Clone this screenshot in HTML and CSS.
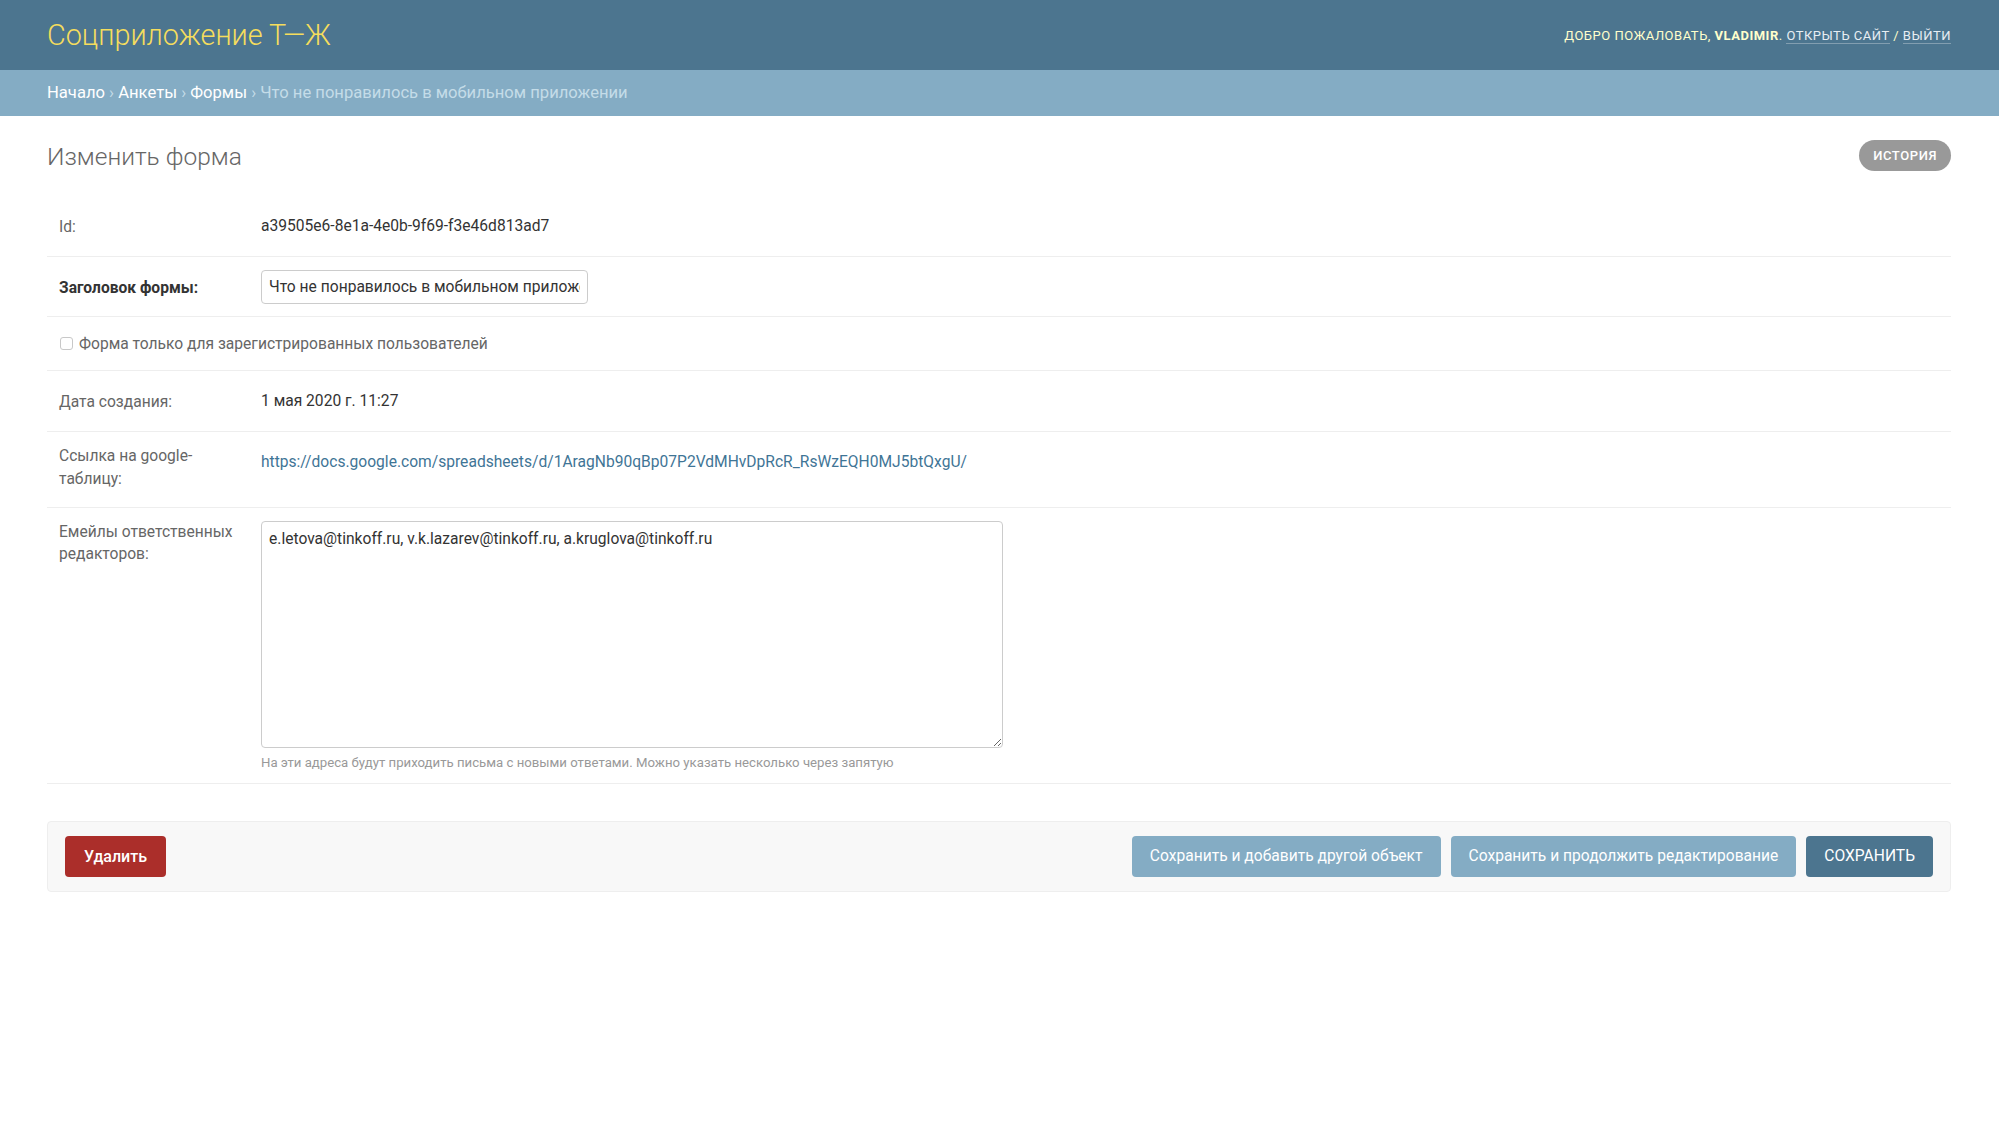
FILE: index.html
```html
<!DOCTYPE html>
<html lang="ru">
<head>
<meta charset="utf-8">
<title>Изменить форма | Соцприложение Т—Ж</title>
<link rel="stylesheet" href="styles.css">
</head>
<body>
<header class="header">
  <h1 class="branding">Соцприложение Т—Ж</h1>
  <div class="user-tools">
    Добро пожаловать, <strong>vladimir</strong>.
    <a href="#">Открыть сайт</a> /
    <a href="#">Выйти</a>
  </div>
</header>
<nav class="breadcrumbs">
  <a href="#">Начало</a> › <a href="#">Анкеты</a> › <a href="#">Формы</a> › Что не понравилось в мобильном приложении
</nav>
<main class="content">
  <div class="content-head">
    <h1 class="page-title">Изменить форма</h1>
    <a class="history" href="#">История</a>
  </div>
  <form class="form">
    <div class="row">
      <label class="label">Id:</label>
      <div class="readonly">a39505e6-8e1a-4e0b-9f69-f3e46d813ad7</div>
    </div>
    <div class="row">
      <label class="label required">Заголовок формы:</label>
      <div class="field"><input class="text-input" type="text" value="Что не понравилось в мобильном приложении"></div>
    </div>
    <div class="row checkbox-row">
      <input class="checkbox" type="checkbox" id="reg">
      <label class="checkbox-label" for="reg">Форма только для зарегистрированных пользователей</label>
    </div>
    <div class="row">
      <label class="label">Дата создания:</label>
      <div class="readonly">1 мая 2020 г. 11:27</div>
    </div>
    <div class="row">
      <label class="label">Ссылка на google-таблицу:</label>
      <div class="readonly"><a class="link" href="#">https://docs.google.com/spreadsheets/d/1AragNb90qBp07P2VdMHvDpRcR_RsWzEQH0MJ5btQxgU/</a></div>
    </div>
    <div class="row">
      <label class="label">Емейлы ответственных редакторов:</label>
      <div class="field">
        <textarea class="textarea">e.letova@tinkoff.ru, v.k.lazarev@tinkoff.ru, a.kruglova@tinkoff.ru</textarea>
        <div class="help">На эти адреса будут приходить письма с новыми ответами. Можно указать несколько через запятую</div>
      </div>
    </div>
    <div class="submit-row">
      <a class="btn delete" href="#">Удалить</a>
      <div class="actions">
        <span class="btn light">Сохранить и добавить другой объект</span>
        <span class="btn light">Сохранить и продолжить редактирование</span>
        <span class="btn default">Сохранить</span>
      </div>
    </div>
  </form>
</main>
</body>
</html>
```

FILE: styles.css
```css
* { box-sizing: border-box; }

body {
  margin: 0;
  background: #fff;
  color: #333;
  font-family: Roboto, "Liberation Sans", Arial, sans-serif;
  font-size: 15.6px;
}

a { text-decoration: none; }

.header {
  height: 70px;
  padding: 0 48px 0 47px;
  display: flex;
  justify-content: space-between;
  align-items: center;
  background: #4c758f;
  color: #ffc;
}

.branding {
  margin: 0;
  font-size: 28.8px;
  font-weight: 300;
  color: #f5dd5d;
  line-height: 1.2;
}

.user-tools {
  font-size: 13px;
  letter-spacing: 0.5px;
  text-transform: uppercase;
  color: #ffc;
}

.user-tools strong { font-weight: 700; }

.user-tools a {
  color: #e8eef3;
  border-bottom: 1px solid rgba(255, 255, 255, 0.3);
}

.breadcrumbs {
  height: 46px;
  padding: 12px 47px;
  background: #84acc4;
  color: #c4dce8;
  font-size: 16.6px;
  line-height: 22px;
}

.breadcrumbs a { color: #fff; }

.content {
  padding: 24px 48px 0 47px;
}

.content-head {
  display: flex;
  justify-content: space-between;
  align-items: flex-start;
}

.page-title {
  margin: 0;
  font-size: 24.5px;
  line-height: 34px;
  font-weight: 300;
  color: #666;
}

.history {
  height: 31px;
  line-height: 31px;
  padding: 0 14px;
  border-radius: 16px;
  background: #999;
  color: #fff;
  font-size: 13px;
  font-weight: 500;
  letter-spacing: 0.6px;
  text-transform: uppercase;
}

.form { margin-top: 22px; }

.row {
  display: flex;
  align-items: flex-start;
  padding: 12px;
  border-bottom: 1px solid #eee;
}

.label {
  flex: none;
  width: 202px;
  padding: 5px 12px 0 0;
  line-height: 1;
  color: #666;
}

.label::after {
  content: "";
  display: inline-block;
  vertical-align: middle;
  height: 30px;
}

.label.required {
  color: #333;
  font-weight: 700;
}

.readonly {
  padding: 7px 0;
  line-height: 22px;
  color: #333;
}

.link { color: #3f7596; }

.field { display: flex; flex-direction: column; }

.text-input {
  width: 327px;
  height: 34px;
  margin-top: 1px;
  padding: 0 7px;
  border: 1px solid #ccc;
  border-radius: 4px;
  font-family: inherit;
  font-size: 15.6px;
  color: #333;
}

.checkbox-row {
  align-items: center;
  padding: 12px;
  height: 54px;
}

.checkbox {
  width: 13px;
  height: 13px;
  margin: 0 6px 0 1px;
  appearance: none;
  border: 1px solid #c8c8c8;
  border-radius: 3px;
  background: #fff;
}

.checkbox-label {
  color: #666;
  line-height: 22px;
}

.textarea {
  display: block;
  width: 742px;
  height: 227px;
  margin-top: 1px;
  padding: 6px 7px;
  border: 1px solid #ccc;
  border-radius: 4px;
  font-family: inherit;
  font-size: 15.6px;
  line-height: 22px;
  color: #333;
  resize: both;
}

.help {
  margin-top: 7px;
  font-size: 13.2px;
  line-height: 16px;
  color: #999;
}

.submit-row {
  display: flex;
  justify-content: space-between;
  align-items: center;
  margin-top: 37px;
  padding: 14px 17px;
  background: #f8f8f8;
  border: 1px solid #eee;
  border-radius: 4px;
}

.actions {
  display: flex;
  gap: 10px;
}

.btn {
  display: block;
  height: 41px;
  line-height: 41px;
  padding: 0 18px;
  border-radius: 4px;
  color: #fff;
  font-size: 15.6px;
}

.delete {
  padding: 0 19px;
  background: #ab2e2a;
  font-size: 16px;
  font-weight: 500;
}

.light { background: #84acc4; }

.default {
  background: #4c758f;
  text-transform: uppercase;
}
```
